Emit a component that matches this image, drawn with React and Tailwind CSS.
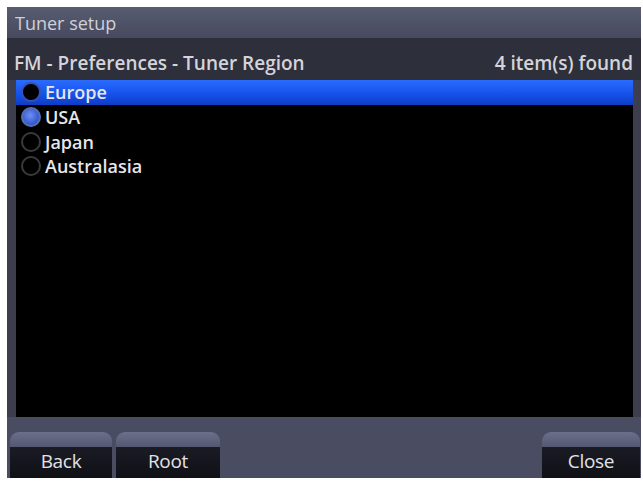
import React from "react";

const font = { fontFamily: '"Open Sans", "Noto Sans", sans-serif' };

function Radio({ kind }) {
  if (kind === "checked") {
    return (
      <span className="w-[20px] h-[20px] rounded-full bg-[radial-gradient(circle_at_45%_40%,#6f8ff0_0%,#3d63d8_55%,#2a45a8_100%)] border-2 border-[#5a6fb0] shrink-0" />
    );
  }
  if (kind === "sel") {
    return <span className="w-[20px] h-[20px] rounded-full bg-black border-2 border-[#3650b8] shrink-0" />;
  }
  return <span className="w-[20px] h-[20px] rounded-full bg-black border-2 border-[#3a3a3a] shrink-0" />;
}

function Row({ label, kind, selected }) {
  return (
    <div
      className={
        "h-[24.7px] flex items-center pl-[5px] gap-[4px] " +
        (selected ? "bg-[linear-gradient(#2a6cff,#1550e8_60%,#0d3cc4)]" : "")
      }
    >
      <Radio kind={kind} />
      <span className="text-[18px] leading-none text-[#e6e6ea] font-semibold">{label}</span>
    </div>
  );
}

function Btn({ label, w }) {
  return (
    <div className={"h-[46px] rounded-t-[9px] overflow-hidden flex flex-col " + w}>
      <div className="h-[15px] bg-[linear-gradient(#6b6f8a,#555872)]" />
      <div className="flex-1 bg-[linear-gradient(#1a1b24,#101116)] flex items-center justify-center pb-[2px]">
        <span className="text-[19px] font-medium text-[#e2e2e6] tracking-[-0.3px] leading-none">{label}</span>
      </div>
    </div>
  );
}

export default function App() {
  return (
    <div className="w-[643px] h-[481px] bg-white pt-[7px] pl-[7px] pr-[2px] pb-[3px]" style={font}>
      <div className="h-full flex flex-col bg-[#3c3e4e]">
        <div className="h-[31px] bg-[linear-gradient(#585c70,#474a5e)] flex items-center pl-[8px]">
          <span className="text-[18px] text-[#cfd0d8] leading-none">Tuner setup</span>
        </div>
        <div className="h-[42px] bg-[#2d2f3b] flex items-center justify-between pl-[7px] pr-[8px] pt-[8px]">
          <span className="text-[19px] font-semibold text-[#d4d4da] leading-none">
            FM - Preferences - Tuner Region
          </span>
          <span className="text-[19px] font-semibold text-[#d4d4da] leading-none">
            4 item(s) found
          </span>
        </div>
        <div className="flex-1 ml-[9px] mr-[8px] bg-black">
          <Row label="Europe" kind="sel" selected />
          <Row label="USA" kind="checked" />
          <Row label="Japan" kind="off" />
          <Row label="Australasia" kind="off" />
        </div>
        <div className="h-[61px] bg-[#4a4c62] flex items-end pl-[3px] pr-[1px]">
          <div className="flex gap-[4px]">
            <Btn label="Back" w="w-[102px]" />
            <Btn label="Root" w="w-[104px]" />
          </div>
          <div className="ml-auto">
            <Btn label="Close" w="w-[98px]" />
          </div>
        </div>
      </div>
    </div>
  );
}
